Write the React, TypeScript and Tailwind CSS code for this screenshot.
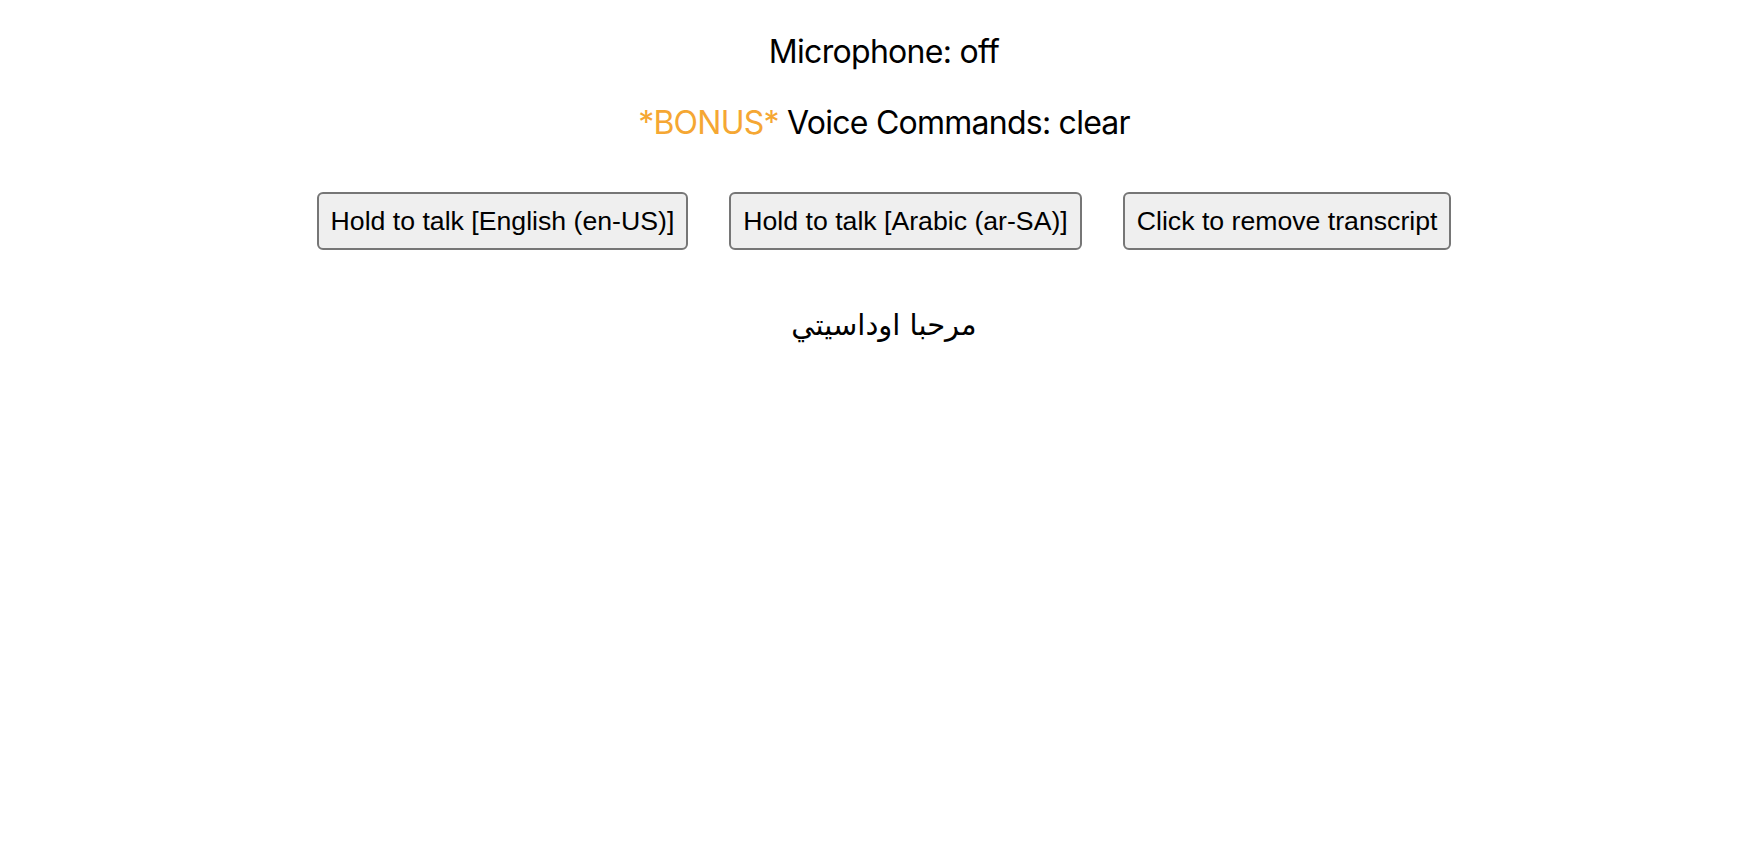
import React from "react";

export default function App() {
  const btn =
    "bg-[#efefef] border-2 border-[#767676] rounded-[6px] px-[12px] py-[11px] leading-[32px] text-[26.67px] text-black whitespace-nowrap";
  return (
    <div className="min-h-[860px] w-full bg-white pl-[12px] flex flex-col items-center text-black">
      <p className="mt-[33px] text-[32px] leading-[38px] tracking-[-0.7px] font-['Inter',sans-serif]">Microphone: off</p>
      <p className="mt-[33px] text-[32px] leading-[38px] tracking-[-0.75px] font-['Inter',sans-serif]">
        <span className="text-[#f5a733]">*BONUS*</span> Voice Commands: clear
      </p>
      <div className="mt-[50px] flex gap-[41px] font-['Liberation_Sans',Arial,sans-serif]">
        <button className={btn}>Hold to talk [English (en-US)]</button>
        <button className={btn}>Hold to talk [Arabic (ar-SA)]</button>
        <button className={btn}>Click to remove transcript</button>
      </div>
      <p dir="rtl" className="mt-[56px] text-[29px] leading-[38px] font-['DejaVu_Sans','Noto_Sans',sans-serif]">
        مرحبا اوداسيتي
      </p>
    </div>
  );
}
